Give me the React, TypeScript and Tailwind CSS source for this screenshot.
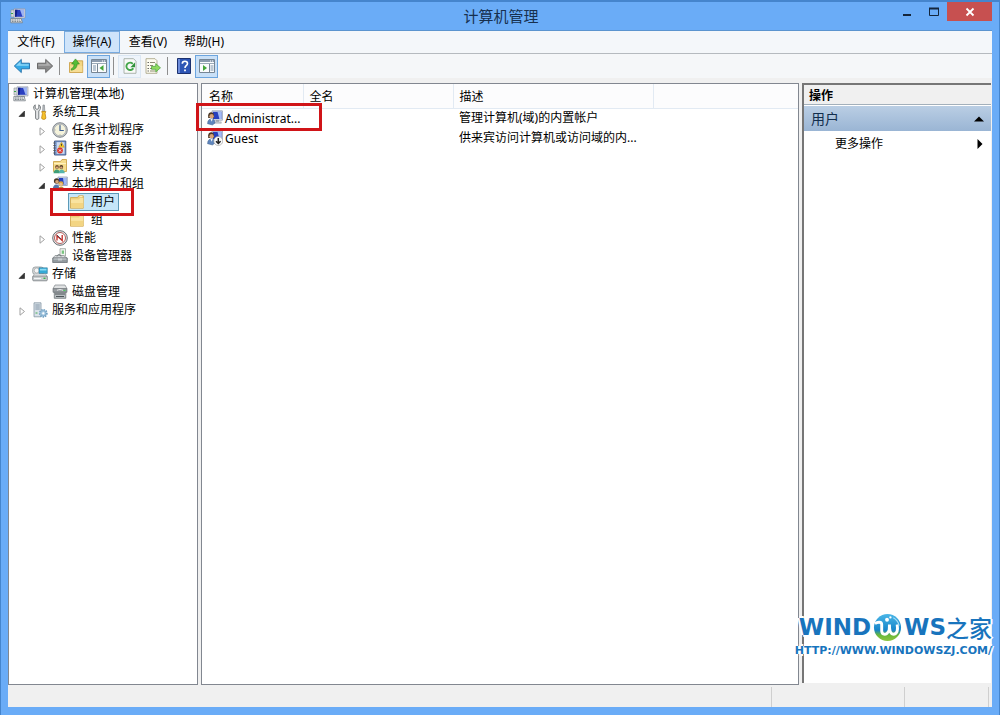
import clsx from "clsx";
import { useState } from "react";

interface IconProps {
  className?: string;
}

const ComputerIcon: React.FC<IconProps> = ({ className }) => (
  <svg viewBox="0 0 16 16" className={clsx("size-4 shrink-0", className)}>
    <path d="M1 2h4v7H1z" fill="#d5d9dc" stroke="#8d9499" strokeWidth=".6" />
    <path d="M4 .8h11v9.2H4z" fill="#d9dde3" stroke="#8a92a5" strokeWidth=".6" />
    <path d="M5 1.8h9v7H5z" fill="#2a3fc0" />
    <path d="M10 1.8h4v7h-1.5z" fill="#9db4f3" />
    <path d="M5 1.8h2.5l-1 7H5z" fill="#15218a" />
    <path d="M8 10h4v1.5H8z" fill="#9ba2a8" />
    <path d="M.8 10.5h10.4l1.2 4.3H.8z" fill="#dfe2e4" stroke="#6f777c" strokeWidth=".7" />
    <path d="M2 12h8M2 13.5h9" stroke="#6b757c" strokeWidth=".8" strokeDasharray="1.6 .8" />
    <path d="M1 5.5h2" stroke="#3da34a" />
  </svg>
);

const ToolsIcon: React.FC<IconProps> = () => (
  <svg viewBox="0 0 16 16" className="size-4 shrink-0">
    <path
      d="M3.2.8v3.4L5 5.5l1.8-1.3V.8C8.5 1.8 9 4 8 5.6L6.8 7v7.2c0 1.6-3.2 1.6-3.2 0V7L2.3 5.6C1.2 4 1.5 1.8 3.2.8z"
      fill="#e4e6e7"
      stroke="#6b7074"
      strokeWidth=".9"
    />
    <path d="M11 1h1.4l.4 6.5h-2.2z" fill="#b9bec2" stroke="#7a7f84" strokeWidth=".6" />
    <path d="M9.7 7.5h4.1l-.7 2 .8 4.5c0 1.9-4.3 1.9-4.3 0l.8-4.5z" fill="#f6c22c" stroke="#b97d0c" strokeWidth=".7" />
  </svg>
);

const ClockIcon: React.FC<IconProps> = () => (
  <svg viewBox="0 0 16 16" className="size-4 shrink-0">
    <circle cx="8" cy="8" r="7.3" fill="#c5c9cc" stroke="#777d82" strokeWidth=".9" />
    <circle cx="8" cy="8" r="5.8" fill="#f5f3dc" stroke="#9da2a5" strokeWidth=".5" />
    <path d="M8 3.3V8.5h3.8" stroke="#3d5f93" strokeWidth="1.2" fill="none" />
    <path d="M8 2.6v.9M8 12.5v.9M2.6 8h.9" stroke="#777" strokeWidth=".7" />
  </svg>
);

const EventLogIcon: React.FC<IconProps> = () => (
  <svg viewBox="0 0 16 16" className="size-4 shrink-0">
    <path d="M2.5 1h11.3v14H2.5z" fill="#7fa0d3" stroke="#3f5687" strokeWidth=".9" />
    <path d="M4.8 2.2h7.6v11.6H4.8z" fill="#cfdaf0" />
    <path d="M1.3 3h2.4M1.3 5.5h2.4M1.3 8h2.4M1.3 10.5h2.4M1.3 13h2.4" stroke="#555" strokeWidth=".9" />
    <path d="M9.5 2.2l2.8 5H6.7z" fill="#f7cf26" stroke="#c28a10" strokeWidth=".5" />
    <path d="M9.5 3.8v2" stroke="#333" strokeWidth=".9" />
    <circle cx="8" cy="10.5" r="2.9" fill="#d9352a" />
    <path d="M6.9 9.4l2.2 2.2m0-2.2l-2.2 2.2" stroke="#fff" strokeWidth=".9" />
  </svg>
);

const SharedFolderIcon: React.FC<IconProps> = () => (
  <svg viewBox="0 0 16 16" className="size-4 shrink-0">
    <path d="M1.5 3.5h7l1.5-2h4.5v12h-13z" fill="#f5dc8c" stroke="#c79c3e" strokeWidth=".8" />
    <path d="M2 5.5h12" stroke="#fff1bd" />
    <circle cx="5" cy="9" r="1.9" fill="#6b4c2c" />
    <circle cx="9.3" cy="9" r="1.9" fill="#4f3a26" />
    <circle cx="5" cy="9.6" r="1.2" fill="#d9a578" />
    <circle cx="9.3" cy="9.6" r="1.2" fill="#d9a578" />
    <path d="M1.5 15.3c0-5 6-5 6.3-1l-.6 1z" fill="#3f9e77" />
    <path d="M6.8 15.3c0-5 5.6-5 6 0z" fill="#55b4ac" />
  </svg>
);

const UserIcon: React.FC<IconProps & { disabled?: boolean }> = ({ disabled }) => (
  <svg viewBox="0 0 16 16" className="size-4 shrink-0">
    <path d="M5 .8h10.4v9.4H5z" fill="#dce2ee" stroke="#8490ad" strokeWidth=".7" />
    <path d="M6 1.8h8.4V9H6z" fill="#2740bd" />
    <path d="M10.5 1.8h3.9V9h-2z" fill="#a3bbf5" />
    <path d="M9 10h3v1.8H9z" fill="#9ca4ad" />
    <path d="M7 11.8h7.3v1.5H7z" fill="#c7cdd3" stroke="#8f979f" strokeWidth=".4" />
    <path d="M1.2 5.2C1.2 1.4 6.8 1.2 7 5v3H1.2z" fill="#4b3827" />
    <circle cx="4.6" cy="6.2" r="2.2" fill="#d9a578" />
    <path d="M.5 13.7C.5 7.3 8 7.3 8 13l-2.5 2z" fill="#5f86bd" stroke="#31527f" strokeWidth=".4" />
    <path d="M3.4 8.8l1.2 3 1.2-3z" fill="#f4f4f4" />
    {disabled && (
      <g>
        <circle cx="11.3" cy="11" r="4.5" fill="#fafafa" stroke="#999" strokeWidth=".6" />
        <path d="M11.3 8v5.2M9 11.2l2.3 2.3 2.3-2.3" stroke="#222" strokeWidth="1.5" fill="none" />
      </g>
    )}
  </svg>
);

const GroupIcon: React.FC<IconProps> = () => (
  <svg viewBox="0 0 16 16" className="size-4 shrink-0">
    <path d="M6 1h9.3v8.5H6z" fill="#dce2ee" stroke="#8490ad" strokeWidth=".7" />
    <path d="M7 2h7.3v6.5H7z" fill="#2740bd" />
    <path d="M11 2h3.3v6.5H12z" fill="#9db7f5" />
    <circle cx="4.6" cy="5" r="2.7" fill="#4b3827" />
    <circle cx="5" cy="5.8" r="1.8" fill="#d9a578" />
    <circle cx="9" cy="7.6" r="2.4" fill="#d8a53c" />
    <circle cx="8.8" cy="8.3" r="1.6" fill="#e7bd91" />
    <path d="M.8 13.5c0-6.5 6-6.5 6.5-1.5l-2 2z" fill="#5375a7" />
    <path d="M5.6 15c0-6 7-6 7.2 0z" fill="#b98a35" />
  </svg>
);

const FolderIcon: React.FC<IconProps> = () => (
  <svg viewBox="0 0 16 16" className="size-4 shrink-0">
    <path d="M1.5 3.5h7.2l1-1.7h4.6v12.4H1.5z" fill="#eed07a" stroke="#cfa549" strokeWidth=".8" />
    <path d="M2 5.5h8l1-1.5h3.3v9.8H2z" fill="#f9e3a0" />
    <path d="M2 9h12v4.8H2z" fill="#f3d583" />
    <path d="M10.5 2.5h3" stroke="#fff8dc" strokeWidth=".8" />
  </svg>
);

const PerformanceIcon: React.FC<IconProps> = () => (
  <svg viewBox="0 0 16 16" className="size-4 shrink-0">
    <circle cx="8" cy="8" r="7.3" fill="#e7e9ea" stroke="#676c70" strokeWidth="1" />
    <circle cx="8" cy="8" r="5.5" fill="#fff" stroke="#a33a35" strokeWidth=".8" />
    <path d="M5 10.5V5.8l5.2 4.8V5" stroke="#c32a24" strokeWidth="1.3" fill="none" />
    <path d="M5 5l4 4" stroke="#40485a" strokeWidth=".8" />
  </svg>
);

const DeviceIcon: React.FC<IconProps> = () => (
  <svg viewBox="0 0 16 16" className="size-4 shrink-0">
    <path d="M8 .7h5.5V8H8z" fill="#f1f4f0" stroke="#8c948e" strokeWidth=".7" />
    <path d="M9.7 2.5H12v3.3H9.7z" fill="#78c47f" />
    <path d="M3 7.5h8.5L15 10H1z" fill="#d8dbdd" stroke="#777d82" strokeWidth=".6" />
    <path d="M.7 10h14.6v4.5H.7z" fill="#929a9f" stroke="#5e666b" strokeWidth=".7" />
    <path d="M1.5 11h13" stroke="#d0d5d8" />
    <path d="M6 10.5h4v2H6z" fill="#ccd1d4" />
    <path d="M5 8.5C5 6 9 6 9 8.5" stroke="#6d7377" fill="none" />
  </svg>
);

const StorageIcon: React.FC<IconProps> = () => (
  <svg viewBox="0 0 16 16" className="size-4 shrink-0">
    <rect x=".7" y="1" width="11" height="7.5" rx="2.5" fill="#d8dcde" stroke="#83898d" strokeWidth=".7" />
    <circle cx="4.7" cy="4.5" r="2.5" fill="#f5f5f5" stroke="#999" strokeWidth=".6" />
    <path d="M7 1.8h8.3v5.7H7z" fill="#35a9d6" stroke="#327b9a" strokeWidth=".6" />
    <path d="M8 2.8h6.4v1.7H8z" fill="#8cdcf4" />
    <path d="M2.5 8h11l1.8 2.5H.7z" fill="#f1f2f3" stroke="#8c9195" strokeWidth=".5" />
    <rect x=".7" y="10" width="14.6" height="4.8" rx="1" fill="#c9cdcf" stroke="#676d71" strokeWidth=".7" />
    <path d="M2 12.5h7" stroke="#f4f5f6" />
    <path d="M11.5 12.3h2" stroke="#38b34a" strokeWidth="1.4" />
  </svg>
);

const DiskIcon: React.FC<IconProps> = () => (
  <svg viewBox="0 0 16 16" className="size-4 shrink-0">
    <path d="M3 1h10l2 3.7H1z" fill="#dfe1e2" stroke="#808589" strokeWidth=".7" />
    <path d="M1 4.7h14v3.6H1z" fill="#9a9fa3" stroke="#62686c" strokeWidth=".6" />
    <path d="M5 6.3c2-1 4-1 6 0" stroke="#e9ebec" fill="none" />
    <path d="M11.5 6.5h2" stroke="#4ad25c" strokeWidth="1.2" />
    <path d="M2.3 8.3h11.5v6H2.3z" fill="#b9bec1" stroke="#62686c" strokeWidth=".7" />
    <path d="M3 10h10M4 12.5h8" stroke="#4e5559" strokeWidth="1" />
  </svg>
);

const ServicesIcon: React.FC<IconProps> = () => (
  <svg viewBox="0 0 16 16" className="size-4 shrink-0">
    <path d="M2 .8h7v14H2z" fill="#d9e2e9" stroke="#8395a2" strokeWidth=".8" />
    <path d="M3.3 3h4.5M3.3 5h4.5M3.3 7h4.5" stroke="#75899b" strokeWidth=".9" />
    <path d="M3.5 11h2" stroke="#46ad54" />
    <circle cx="11.3" cy="11.3" r="3.6" fill="#bcd8ec" stroke="#6f9dc0" strokeWidth="1.6" strokeDasharray="1.4 1" />
    <circle cx="11.3" cy="11.3" r="2.6" fill="#a9cbe4" stroke="#6f9dc0" strokeWidth=".6" />
    <circle cx="11.3" cy="11.3" r="1.1" fill="#fff" />
  </svg>
);

const ArrowIcon: React.FC<{ forward?: boolean }> = ({ forward }) => (
  <svg viewBox="0 0 16 16" className={clsx("size-4", forward && "-scale-x-100")}>
    <path
      d="M.3 8l7-6.6v3.8h8.2v5.6H7.3v3.8z"
      fill={forward ? "#8b8b8b" : "#35a9e6"}
      stroke={forward ? "#606060" : "#1f6ea8"}
      strokeWidth=".9"
    />
    <path d="M2 7.7l4.5-4.2v2.8h8.2v1.4z" fill={forward ? "#b1b1b1" : "#8bd6f7"} />
  </svg>
);

const FolderUpIcon = () => (
  <svg viewBox="0 0 16 16" className="size-4">
    <path d="M1.5 4.5h6l1.3-1.7h5.9v11.7H1.5z" fill="#f4d783" stroke="#c89b3c" strokeWidth=".8" />
    <path d="M2 8h12.3v6H2z" fill="#f6dd95" />
    <path d="M3.3 10.8C5.6 9.8 6 8.3 6 6H3.6L7.5.9 11.4 6H9.1c-.1 3.6-1.8 5.4-5.8 6.2z" fill="#56bd36" stroke="#2e851d" strokeWidth=".6" />
  </svg>
);

const PaneIcon: React.FC<{ right?: boolean }> = ({ right }) => (
  <svg viewBox="0 0 16 16" className="size-4">
    <path d="M.5 1.5h15v13H.5z" fill="#fbfcfd" stroke="#778694" />
    <path d="M1 2h14v2H1z" fill="#8c9caf" />
    <path d="M11 3h1m1 0h1" stroke="#fff" />
    <path d="M1 5.5h14" stroke="#9baab8" />
    <path d={right ? "M10.5 6v8" : "M6.5 6v8"} stroke="#778694" />
    <path d={right ? "M11.5 8h3m-3 2h3m-3 2h3" : "M2 8h3M2 10h3M2 12h3"} stroke="#7d94ab" />
    <path d={right ? "M4 7l4 3-4 3z" : "M12.5 7l-4 3 4 3z"} fill="#45a63a" />
  </svg>
);

const RefreshIcon = () => (
  <svg viewBox="0 0 16 16" className="size-4">
    <path d="M2 .7h9.5L14 3.2v12.1H2z" fill="#f8faf8" stroke="#9aa39b" strokeWidth=".8" />
    <path d="M11.3 10.2A3.7 3.7 0 1 1 10.8 5.8" stroke="#44a64b" strokeWidth="1.9" fill="none" />
    <path d="M13 4.6v4.7H8.4z" fill="#2f9139" />
  </svg>
);

const ExportIcon = () => (
  <svg viewBox="0 0 16 16" className="size-4">
    <path d="M1 .7h9l2 2v12.6H1z" fill="#fdfcf0" stroke="#a49e7e" strokeWidth=".8" />
    <path d="M2.6 4.5h1.2M2.6 7.5h1.2M2.6 10.5h1.2M2.6 13h1.2" stroke="#444" />
    <path d="M5 4.5h5M5 7.5h3M5 10.5h3M5 13h5" stroke="#8e8c73" />
    <path d="M6.5 8.3h4.2V5.6l4.8 4.2-4.8 4.2v-2.7H6.5z" fill="#8fdb5e" stroke="#34912a" strokeWidth=".6" />
  </svg>
);

const HelpIcon = () => (
  <svg viewBox="0 0 16 16" className="size-4">
    <path d="M1.5.5h13v15h-13z" fill="#2d55b5" stroke="#1b316f" />
    <path d="M2 1h2v14H2z" fill="#6d8cda" />
    <path d="M6.3 5.8c0-3.4 5.2-3.2 5.2-.2 0 2.2-2.5 2-2.5 4.3" stroke="#fff" strokeWidth="1.6" fill="none" />
    <path d="M8.1 11.4h1.8v1.8H8.1z" fill="#fff" />
  </svg>
);

interface TreeNode {
  label: string;
  level: number;
  icon: React.FC<IconProps>;
  state?: "open" | "closed";
}

const tree: TreeNode[] = [
  { label: "计算机管理(本地)", level: 0, icon: ComputerIcon },
  { label: "系统工具", level: 1, icon: ToolsIcon, state: "open" },
  { label: "任务计划程序", level: 2, icon: ClockIcon, state: "closed" },
  { label: "事件查看器", level: 2, icon: EventLogIcon, state: "closed" },
  { label: "共享文件夹", level: 2, icon: SharedFolderIcon, state: "closed" },
  { label: "本地用户和组", level: 2, icon: GroupIcon, state: "open" },
  { label: "用户", level: 3, icon: FolderIcon },
  { label: "组", level: 3, icon: FolderIcon },
  { label: "性能", level: 2, icon: PerformanceIcon, state: "closed" },
  { label: "设备管理器", level: 2, icon: DeviceIcon },
  { label: "存储", level: 1, icon: StorageIcon, state: "open" },
  { label: "磁盘管理", level: 2, icon: DiskIcon },
  { label: "服务和应用程序", level: 1, icon: ServicesIcon, state: "closed" },
];

const indents = ["pl-[3px]", "pl-2", "pl-7", "pl-[47px]"];

const menus = ["文件(F)", "操作(A)", "查看(V)", "帮助(H)"];

const users = [
  { name: "Administrat...", description: "管理计算机(域)的内置帐户" },
  { name: "Guest", description: "供来宾访问计算机或访问域的内...", disabled: true },
];

const Expander: React.FC<{ state?: "open" | "closed" }> = ({ state }) => (
  <svg viewBox="0 0 9 9" className="mt-0.5 mr-[5px] size-[9px] shrink-0">
    {state === "open" && <path d="M7.5 2v5.5H2z" fill="#333" stroke="#222" strokeWidth=".6" />}
    {state === "closed" && <path d="M3 .8v7.4L7.5 4.5z" fill="#fff" stroke="#a0a0a0" />}
  </svg>
);

const TreeItem: React.FC<{
  node: TreeNode;
  selected: boolean;
  onSelect: () => void;
}> = ({ node, selected, onSelect }) => {
  const Icon = node.icon;
  return (
    <li className={clsx("relative flex h-[18px] items-center", indents[node.level])}>
      {(node.level === 1 || node.level === 2) && <Expander state={node.state} />}
      <button
        onClick={onSelect}
        className={clsx(
          "flex h-[18px] items-center border whitespace-nowrap",
          node.level === 3 ? "ml-3 gap-1.5 pr-[3px]" : "gap-1 pr-1",
          selected ? "border-[#5c9ab8] bg-[#c6e6f8]" : "border-transparent"
        )}
      >
        <Icon />
        {node.label}
      </button>
      {node.label === "用户" && (
        <span className="pointer-events-none absolute -top-[5px] left-[41px] z-10 h-7 w-[84px] border-3 border-[#d01418]" />
      )}
    </li>
  );
};

const ToolButton: React.FC<{
  label: string;
  variant?: "pressed" | "hover";
  children: React.ReactNode;
}> = ({ label, variant, children }) => (
  <button
    aria-label={label}
    className={clsx(
      "flex size-[23px] items-center justify-center border",
      variant === "pressed" && "border-[#6ca5de] bg-[#c9e0f7]",
      variant === "hover" && "border-[#dbe7f3] bg-[#eef4fb]",
      !variant && "border-transparent"
    )}
  >
    {children}
  </button>
);

const ToolDivider = () => <span className="mr-1 ml-[3px] h-[18px] w-px bg-[#8e8e8e]" />;

const Watermark = () => (
  <div className="pointer-events-none absolute right-0 bottom-12 flex flex-col items-end font-['DejaVu_Sans',sans-serif] font-bold text-[#1874bd] [text-shadow:2px_0_#fff,-2px_0_#fff,0_2px_#fff,0_-2px_#fff]">
    <div className="flex items-center text-[23px] leading-[32px]">
      <span>WIND</span>
      <svg viewBox="0 0 30 30" className="mx-0.5 size-[29px]">
        <defs>
          <linearGradient id="globe" x1="0" y1="0" x2="0" y2="1">
            <stop offset="0" stopColor="#4bb7e8" />
            <stop offset=".6" stopColor="#1685c9" />
            <stop offset=".78" stopColor="#69b83b" />
            <stop offset="1" stopColor="#8cc63f" />
          </linearGradient>
        </defs>
        <circle cx="15" cy="15" r="14" fill="url(#globe)" />
        <path d="M2 11c3-2 7-2 7 1v6c0 4 3 5 5.5 3s2.500-4 2.500-9c0 7 1 10 4 10 4 0 5-4 4-10" fill="none" stroke="#fff" strokeWidth="3" />
        <circle cx="14.5" cy="7" r="2" fill="#fff" />
        <circle cx="18" cy="4.600" r="1.200" fill="#fff" />
        <path d="M21 5c4 2 5 4 6 8" fill="none" stroke="#a6ddf5" strokeWidth="1.200" />
      </svg>
      <span>WS</span>
      <span className="font-['Noto_Sans_CJK_SC',sans-serif] font-medium">之家</span>
    </div>
    <div className="text-[11px] leading-[16px]">HTTP://WWW.WINDOWSZJ.COM/</div>
  </div>
);

export default function App() {
  const [selected, setSelected] = useState("用户");

  return (
    <div className="flex h-screen flex-col border-t-2 border-r border-l border-[#4585cd] bg-[#6aacf7] px-[7px] pb-2 font-['Noto_Sans','Noto_Sans_CJK_SC',sans-serif] text-xs text-black">
      <header className="flex h-7 shrink-0 items-start">
        <div className="flex h-7 flex-1 items-center pl-0.5">
          <ComputerIcon />
        </div>
        <h1 className="text-[15px] leading-7 text-[#17304f]">计算机管理</h1>
        <div className="flex flex-1 justify-end">
          <button aria-label="最小化" className="flex h-5 w-7 items-center justify-center">
            <svg viewBox="0 0 12 12" className="size-3">
              <path d="M2 9h8" stroke="#14263c" strokeWidth="2" />
            </svg>
          </button>
          <button aria-label="最大化" className="flex h-5 w-[26px] items-center justify-center">
            <svg viewBox="0 0 12 12" className="size-3">
              <path d="M1.5 2.5h9v7h-9z" fill="none" stroke="#14263c" />
              <path d="M1 2.500h10" stroke="#14263c" strokeWidth="2" />
            </svg>
          </button>
          <button aria-label="关闭" className="flex h-[19px] w-[45px] items-center justify-center bg-[#c75050]">
            <svg viewBox="0 0 10 10" className="size-2.5">
              <path d="M1.5 1.5l7 7m0-7l-7 7" stroke="#fff" strokeWidth="1.8" />
            </svg>
          </button>
        </div>
      </header>

      <div className="relative flex min-h-0 flex-1 flex-col border-t border-[#5b94cf] bg-[#f0f0f0]">
        <nav className="flex h-[23px] shrink-0 border-b border-[#b5babf] bg-[#f4f7fa]">
          {menus.map((menu) => (
            <button
              key={menu}
              className={clsx(
                "flex w-14 items-center justify-center border",
                menu === "操作(A)" ? "border-[#78abe0] bg-[#cfe4fa]" : "border-transparent"
              )}
            >
              {menu}
            </button>
          ))}
        </nav>

        <div className="flex h-6 shrink-0 items-center bg-[#f5f7f9] pl-0.5">
          <ToolButton label="后退">
            <ArrowIcon />
          </ToolButton>
          <ToolButton label="前进">
            <ArrowIcon forward />
          </ToolButton>
          <ToolDivider />
          <ToolButton label="向上">
            <FolderUpIcon />
          </ToolButton>
          <ToolButton label="显示/隐藏控制台树" variant="pressed">
            <PaneIcon />
          </ToolButton>
          <ToolDivider />
          <ToolButton label="刷新" variant="hover">
            <RefreshIcon />
          </ToolButton>
          <ToolButton label="导出列表">
            <ExportIcon />
          </ToolButton>
          <ToolDivider />
          <ToolButton label="帮助">
            <HelpIcon />
          </ToolButton>
          <ToolButton label="显示/隐藏操作窗格" variant="pressed">
            <PaneIcon right />
          </ToolButton>
        </div>

        <div className="mt-[5px] flex min-h-0 flex-1 gap-[3px]">
          <ul className="w-[190px] shrink-0 border border-[#828790] bg-white pt-px">
            {tree.map((node) => (
              <TreeItem
                key={node.label}
                node={node}
                selected={selected === node.label}
                onSelect={() => setSelected(node.label)}
              />
            ))}
          </ul>

          <main className="min-w-0 flex-1 border border-[#828790] bg-white">
            <table className="w-full table-fixed text-left">
              <thead>
                <tr className="h-6 border-b border-[#e2eaf3] bg-[#fcfcfd]">
                  <th className="w-[101px] border-r border-[#e2eaf3] pt-0.5 pl-[7px] font-normal">名称</th>
                  <th className="w-[150px] border-r border-[#e2eaf3] pt-0.5 pl-1.5 font-normal">全名</th>
                  <th className="w-[200px] border-r border-[#e2eaf3] pt-0.5 pl-1.5 font-normal">描述</th>
                  <th aria-label="空" />
                </tr>
              </thead>
              <tbody>
                {users.map((user) => (
                  <tr key={user.name} className="h-5">
                    <td className="relative pl-[5px]">
                      <span className="flex items-center gap-0.5 leading-[19px] whitespace-nowrap">
                        <UserIcon disabled={user.disabled} />
                        {user.name}
                      </span>
                      {!user.disabled && (
                        <span className="pointer-events-none absolute -top-1.5 -left-1.5 z-10 h-7 w-[126px] border-3 border-[#d01418]" />
                      )}
                    </td>
                    <td />
                    <td className="pl-1.5 whitespace-nowrap">{user.description}</td>
                    <td />
                  </tr>
                ))}
              </tbody>
            </table>
          </main>

          <aside className="mr-px mb-0.5 w-[189px] shrink-0 border-t-2 border-l-2 border-[#767676] bg-white">
            <h2 className="h-5 border-b border-[#a3b0bb] bg-[#f0f0f0] pl-[5px] leading-[22px] font-bold">操作</h2>
            <button className="mt-px flex h-[25px] w-full items-center justify-between bg-linear-to-b from-[#bacee4] to-[#9ab5d4] px-[7px] text-sm text-[#122d4d]">
              用户
              <svg viewBox="0 0 10 6" className="h-1.5 w-2.5">
                <path d="M0 5.5L5 .5l5 5z" fill="#000" />
              </svg>
            </button>
            <button className="flex h-[26px] w-full items-center justify-between pr-2 pl-[31px]">
              更多操作
              <svg viewBox="0 0 6 10" className="h-2.5 w-1.5">
                <path d="M.5 0l5 5-5 5z" fill="#000" />
              </svg>
            </button>
          </aside>
        </div>

        <footer className="flex h-[22px] shrink-0 justify-end pt-0.5">
          <span className="w-[133px] border-l border-[#cfcfcf]" />
          <span className="w-[85px] border-x border-[#cfcfcf]" />
          <span className="w-[3px]" />
        </footer>

        <Watermark />
      </div>
    </div>
  );
}
